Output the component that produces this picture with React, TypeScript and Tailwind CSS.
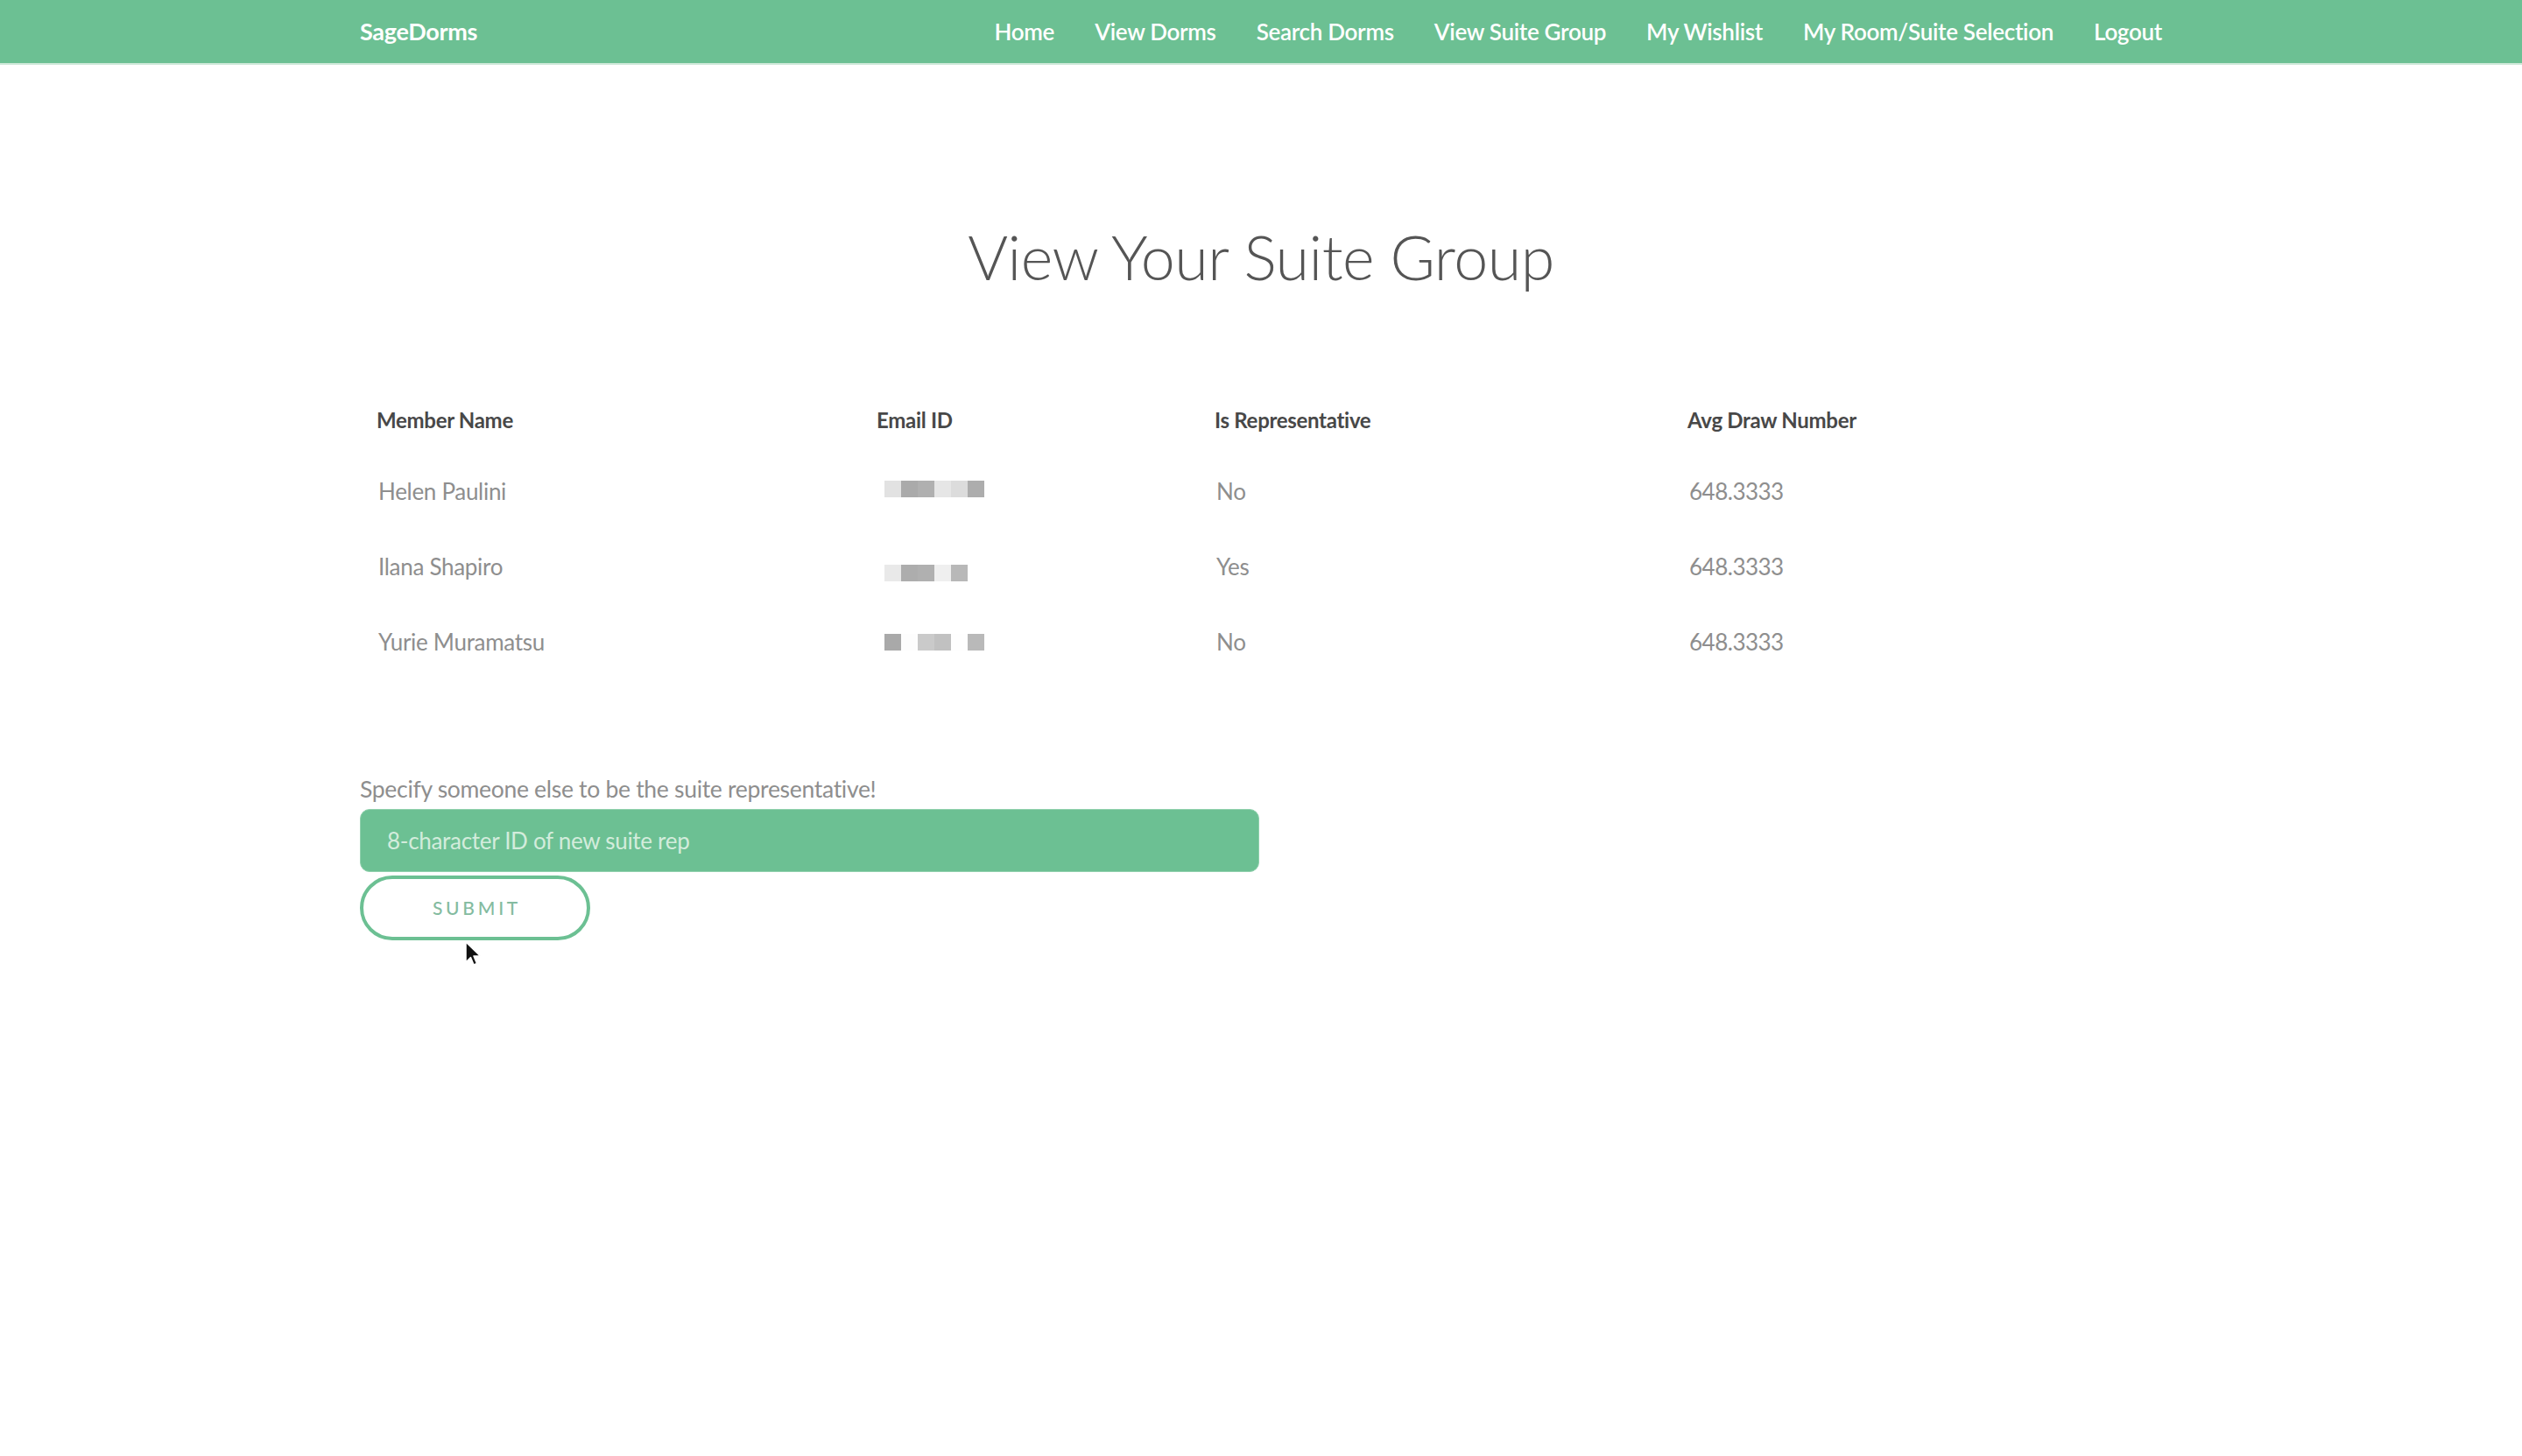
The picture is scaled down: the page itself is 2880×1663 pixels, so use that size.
import React from 'react';

const NAV_LINKS = [
  'Home',
  'View Dorms',
  'Search Dorms',
  'View Suite Group',
  'My Wishlist',
  'My Room/Suite Selection',
  'Logout',
];

interface Member {
  name: string;
  // pixelated email, one grey per 19px block
  emailBlocks: string[];
  /** small vertical nudge of the blurred block row */
  emailOffset: string;
  isRep: boolean;
  avgDraw: string;
}

const MEMBERS: Member[] = [
  {
    name: 'Helen Paulini',
    emailBlocks: ['#e2e2e2', '#aaaaaa', '#b0b0b0', '#e6e6e6', '#dcdcdc', '#adadad'],
    emailOffset: '-translate-y-[3px]',
    isRep: false,
    avgDraw: '648.3333',
  },
  {
    name: 'Ilana Shapiro',
    emailBlocks: ['#e9e9e9', '#adadad', '#b0b0b0', '#efefef', '#b8b8b8'],
    emailOffset: 'translate-y-[7px]',
    isRep: true,
    avgDraw: '648.3333',
  },
  {
    name: 'Yurie Muramatsu',
    emailBlocks: ['#a9a9a9', '#fdfdfd', '#cacaca', '#c1c1c1', '#fefefe', '#b9b9b9'],
    emailOffset: 'translate-y-0',
    isRep: false,
    avgDraw: '648.3333',
  },
];

const FONT = "font-['Lato','Liberation_Sans',sans-serif]";

const Navbar: React.FC = () => (
  <nav className="bg-[#6cc093] border-b-2 border-[#cde8d8]">
    <div className="w-[2058px] mx-auto h-[72px] flex items-center justify-between">
      <span className="text-white text-[27px] font-bold tracking-[-0.3px]">SageDorms</span>
      <ul className="flex items-center gap-[46px]">
        {NAV_LINKS.map((link) => (
          <li key={link} className="text-white text-[26px] font-semibold tracking-[-0.3px]">
            {link}
          </li>
        ))}
      </ul>
    </div>
  </nav>
);

const EmailMosaic: React.FC<{ blocks: string[]; offset: string }> = ({ blocks, offset }) => (
  <div className={`flex ml-[9px] ${offset}`}>
    {blocks.map((color, i) => (
      <span key={i} className="w-[19px] h-[19px]" style={{ backgroundColor: color }} />
    ))}
  </div>
);

const SuiteTable: React.FC = () => {
  const cols = 'grid grid-cols-[571px_386px_540px_1fr] items-center pl-[19px]';
  return (
    <div className="mt-[106px]">
      {/* Header */}
      <div className={`${cols} h-[76px] text-[24px] font-bold text-[#484848] tracking-[-0.3px]`}>
        <span>Member Name</span>
        <span>Email ID</span>
        <span>Is Representative</span>
        <span>Avg Draw Number</span>
      </div>
      {/* Rows */}
      {MEMBERS.map((m) => (
        <div
          key={m.name}
          className={`${cols} h-[86px] text-[26px] text-[#8e8e8e] tracking-[-0.3px]`}
        >
          <span className="pl-[2px]">{m.name}</span>
          <EmailMosaic blocks={m.emailBlocks} offset={m.emailOffset} />
          <span className="pl-[2px]">{m.isRep ? 'Yes' : 'No'}</span>
          <span className="pl-[2px] tracking-[-0.5px]">{m.avgDraw}</span>
        </div>
      ))}
    </div>
  );
};

const RepForm: React.FC = () => (
  <form className="mt-[110px] flex flex-col" onSubmit={(e) => e.preventDefault()}>
    <label className="text-[26.5px] leading-[30px] text-[#8e8e8e] tracking-[-0.3px]">
      Specify someone else to be the suite representative!
    </label>
    <input
      type="text"
      placeholder="8-character ID of new suite rep"
      className="mt-[8px] w-[1027px] h-[72px] rounded-[11px] bg-[#6cc093] border border-[#8fd0ac] px-[30px] text-[26px] tracking-[-0.3px] text-white placeholder:text-[#d3ecdc] outline-none"
    />
    <button
      type="submit"
      className="mt-[4px] w-[263px] h-[74px] rounded-full border-4 border-[#6cc093] bg-white text-[21px] tracking-[0.18em] text-[#84bba0] font-medium pl-[4px]"
    >
      SUBMIT
    </button>
  </form>
);

const Cursor: React.FC = () => (
  <svg
    className="absolute left-[531px] top-[1075px]"
    width="20"
    height="30"
    viewBox="0 0 20 30"
  >
    <path
      d="M1 1 L1 24 L6.5 18.5 L10 27 L13.5 25.5 L10 17 L17.5 17 Z"
      fill="#111"
      stroke="#fff"
      strokeWidth="1.5"
      strokeLinejoin="round"
    />
  </svg>
);

export default function App() {
  return (
    <div className={`relative min-h-[1663px] bg-white ${FONT}`}>
      <Navbar />
      <main className="w-[2058px] mx-auto">
        <h1 className="mt-[176px] text-center text-[70px] leading-[86px] font-light text-[#555555] tracking-[-0.5px]">
          View Your Suite Group
        </h1>
        <SuiteTable />
        <RepForm />
      </main>
      <Cursor />
    </div>
  );
}
